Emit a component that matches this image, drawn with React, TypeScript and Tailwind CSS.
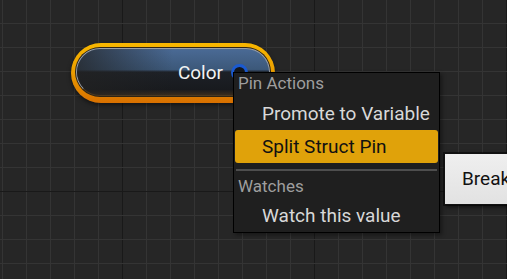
import React from "react";

function Grid() {
  const vs: number[] = [];
  for (let x = 2; x < 507; x += 24) vs.push(x);
  const hs: number[] = [];
  for (let y = -1; y < 279; y += 24) hs.push(y);
  return (
    <svg className="absolute inset-0" width={507} height={279} viewBox="0 0 507 279">
      {vs.map((x) => (
        <rect key={"v" + x} x={x} y={0} width={1} height={279} fill={(x - 122) % 192 === 0 ? "#191919" : "#343434"} />
      ))}
      {hs.map((y) => (
        <rect key={"h" + y} x={0} y={y} width={507} height={1} fill={(y - 191) % 192 === 0 ? "#191919" : "#343434"} />
      ))}
    </svg>
  );
}

export default function App() {
  return (
    <div className="relative w-[507px] h-[279px] overflow-hidden bg-[#262626] font-[Roboto,sans-serif]">
      <Grid />

      {/* Node */}
      <div className="absolute left-[71px] top-[43px] w-[204px] h-[60px] rounded-full bg-[linear-gradient(to_bottom,#f8b700,#eca000_45%,#d87000)] pt-[4px] px-[4px] pb-[6px] shadow-[0_2px_4px_rgba(0,0,0,0.5)]">
        <div className="h-full rounded-full bg-[#2e2414] p-px">
          <div className="relative h-full rounded-full overflow-hidden border border-[#9aa0a8] border-b-[#4a3a24] bg-[linear-gradient(to_bottom,#4a6a95_0%,#3c5879_45%,#1d2127_50%,#181a1e_88%,#3a2c1c_100%)]">
            <div className="absolute inset-0 bg-[linear-gradient(to_right,rgba(34,34,34,0.75),rgba(34,34,34,0)_50%)]" />
            <div className="relative h-full flex items-center justify-end gap-[8px] pr-[21px]">
              <span className="text-[19px] leading-none text-[#f2f2f2]">Color</span>
              <svg width={17} height={17} viewBox="0 0 17 17">
                <circle cx={8.5} cy={8.5} r={7} fill="#14171c" stroke="#1b5ad0" strokeWidth={3} />
              </svg>
            </div>
          </div>
        </div>
      </div>

      {/* Context menu */}
      <div className="absolute left-[233px] top-[72px] w-[207px] h-[161px] bg-[#1f1f1f] border border-black flex flex-col shadow-[2px_2px_4px_rgba(0,0,0,0.4)]">
        <div className="h-[24px] shrink-0 pl-[4px] text-[17px] leading-[20px] text-[#9e9e9e]">Pin Actions</div>
        <div className="h-[33px] shrink-0 pl-[28px] text-[19px] leading-[33px] text-[#d8d8d8]">Promote to Variable</div>
        <div className="h-[33px] shrink-0 mx-px rounded-[3px] bg-[#e0a20a] pl-[27px] text-[19px] leading-[33px] text-[#111111]">Split Struct Pin</div>
        <div className="h-[2px] shrink-0 mx-[2px] mt-[6px] bg-[#4e4e4e]" />
        <div className="h-[23px] shrink-0 mt-[5px] pl-[4px] text-[17px] leading-[20px] text-[#9e9e9e]">Watches</div>
        <div className="h-[33px] shrink-0 pl-[28px] text-[19px] leading-[33px] text-[#d8d8d8]">Watch this value</div>
      </div>

      {/* Tooltip */}
      <div className="absolute left-[444px] top-[153px] w-[110px] h-[52px] border border-[#111111] bg-[linear-gradient(to_bottom,#efefef,#e2e2e2)] shadow-[0_0_0_1px_rgba(0,0,0,0.5),2px_2px_4px_rgba(0,0,0,0.6)] flex items-center pl-[17px]">
        <span className="text-[19px] text-[#111111]">Break</span>
      </div>
    </div>
  );
}
